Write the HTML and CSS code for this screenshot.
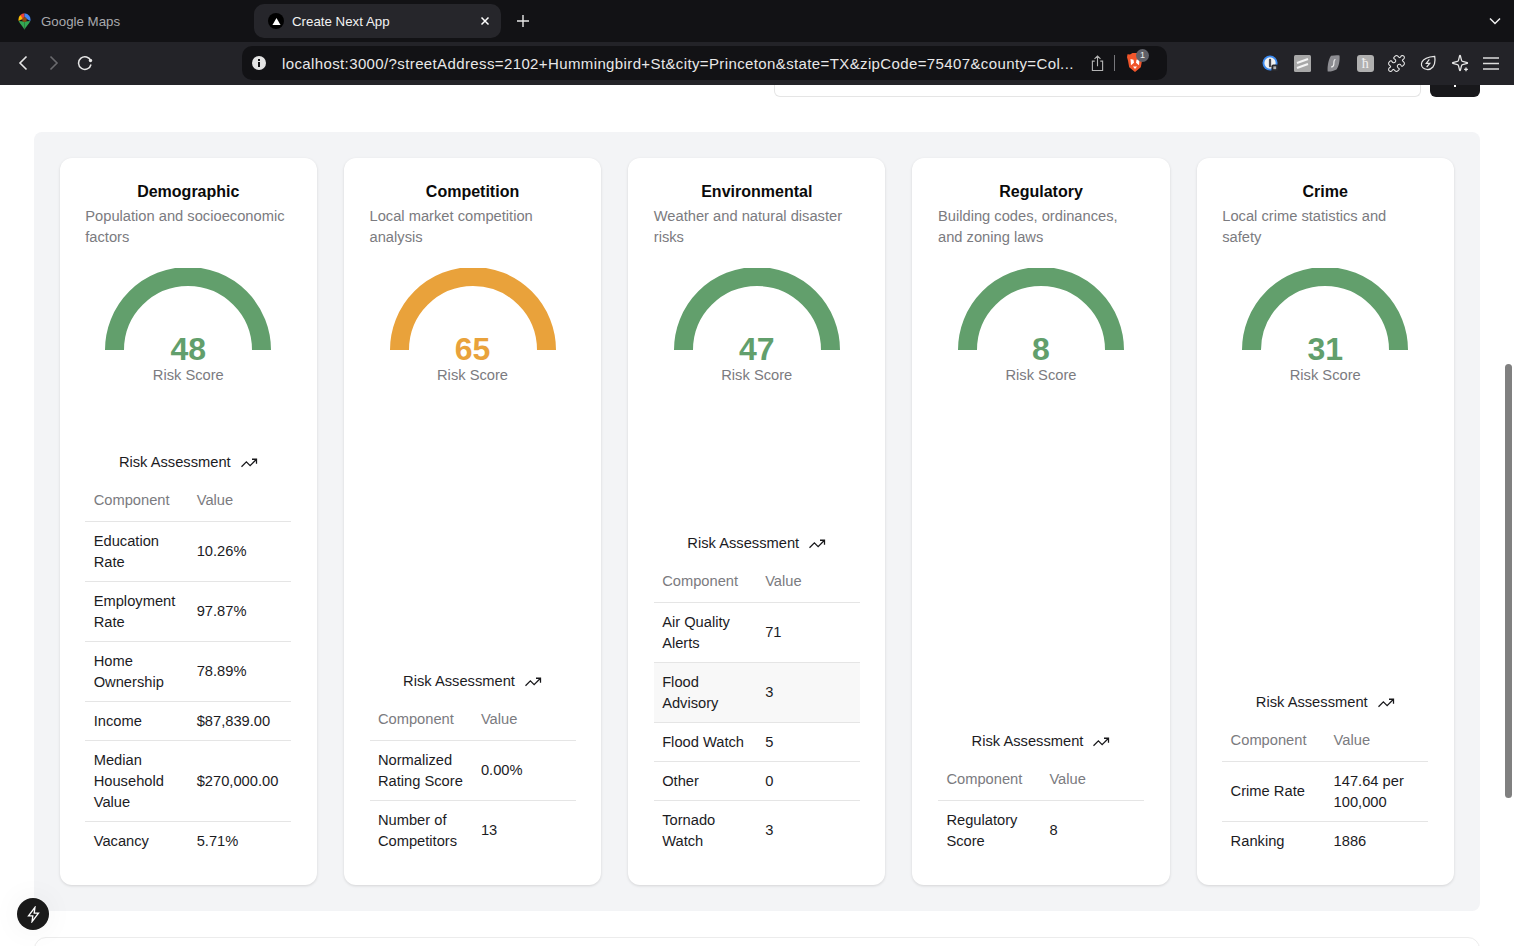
FILE: index.html
```html
<!DOCTYPE html>
<html lang="en">
<head>
<meta charset="utf-8">
<title>Create Next App</title>
<link rel="stylesheet" href="styles.css">
</head>
<body>
<div class="browser">
  <header class="tabstrip">
    <div class="tab tab-idle">
      <svg class="favicon" viewBox="0 0 14 18" width="13" height="17"><path fill="#34a853" d="M7 18c-1-3-5-6-6.300-9.500L7 9z"/><path fill="#34a853" d="M7 18c1-3 5-6 6.300-9.500L7 9z"/><path fill="#ea4335" d="M2.500 2A7 7 0 0 1 7 0v5L4 7.500z"/><path fill="#4285f4" d="M7 0a7 7 0 0 1 6.300 8.500L9 6 7 4z"/><path fill="#fbbc04" d="M2.500 2A7 7 0 0 0 .7 8.500L5 6z"/><circle cx="7" cy="7" r="2.500" fill="#8a4a10"/></svg>
      <span>Google Maps</span>
    </div>
    <div class="tab tab-active">
      <span class="next-fav"><svg viewBox="0 0 10 10" width="9" height="9"><path d="M5 1l4.500 8h-9z" fill="#fff"/></svg></span>
      <span class="tab-title">Create Next App</span>
      <svg class="tab-close" viewBox="0 0 10 10" width="10" height="10"><path d="M1.500 1.500l7 7M8.500 1.500l-7 7" stroke="#fff" stroke-width="1.500" fill="none"/></svg>
    </div>
    <svg class="tab-new" viewBox="0 0 12 12" width="12" height="12"><path d="M6 0v12M0 6h12" stroke="#e8e8e8" stroke-width="1.400" fill="none"/></svg>
    <svg class="tab-menu" viewBox="0 0 12 8" width="12" height="8"><path d="M1 1.500l5 5 5-5" stroke="#f0f0f0" stroke-width="1.500" fill="none"/></svg>
  </header>
  <nav class="toolbar">
    <div class="nav-buttons">
      <span class="tool"><svg viewBox="0 0 10 16" width="10" height="16"><path d="M8.500 1.500L2 8l6.500 6.500" stroke="#e6e6e6" stroke-width="1.600" fill="none"/></svg></span>
      <span class="tool"><svg viewBox="0 0 10 16" width="10" height="16"><path d="M1.500 1.500L8 8l-6.500 6.500" stroke="#6a6a6e" stroke-width="1.600" fill="none"/></svg></span>
      <span class="tool"><svg viewBox="0 0 16 16" width="16" height="16"><path d="M13.800 6A6.300 6.300 0 1 0 14 9.500" stroke="#e6e6e6" stroke-width="1.500" fill="none"/><circle cx="13.500" cy="5.500" r="1.700" fill="#e6e6e6"/></svg></span>
    </div>
    <div class="address">
      <svg class="info" viewBox="0 0 14 14" width="14" height="14"><circle cx="7" cy="7" r="7" fill="#e4e4e4"/><rect x="6" y="6" width="2" height="5" fill="#121215"/><rect x="6" y="3" width="2" height="2" fill="#121215"/></svg>
      <span class="url">localhost:3000/?streetAddress=2102+Hummingbird+St&amp;city=Princeton&amp;state=TX&amp;zipCode=75407&amp;county=Col...</span>
      <svg class="share" viewBox="0 0 14 18" width="13" height="17"><path d="M4 6.500H1.500v10h11v-10H10M7 12V1M3.800 4L7 1l3.200 3" stroke="#b4b4b4" stroke-width="1.200" fill="none"/></svg>
      <span class="sep"></span>
      <span class="brave">
        <svg viewBox="0 0 16 20" width="16" height="20"><path fill="#f1562b" d="M3 1.500L5.500 0h5L13 1.500l2.500-.3.500 3-1 3.500-1.200 6.500L8 19l-5.800-4.800L1 7.700 0 4.200l.5-3z"/><path fill="#fff" d="M3.500 6l3 .8.500 3-3 2.500zm9 0l-3 .8-.5 3 3 2.500zM6 13.500h4L8 16z"/></svg>
        <span class="badge">1</span>
      </span>
    </div>
    <div class="extensions">
      <span class="tool"><svg viewBox="0 0 18 18" width="17" height="17"><circle cx="8.500" cy="8.500" r="8" fill="#3d8bf0"/><circle cx="8.500" cy="8.500" r="6" fill="#f2f2f2"/><rect x="7.300" y="4" width="2.400" height="9" rx="1" fill="#4a4a50"/><rect x="10" y="10" width="7" height="7" rx="2" fill="#2a2a2e"/><rect x="12" y="12" width="3" height="3" fill="#b0b0b0"/></svg></span>
      <span class="tool"><svg viewBox="0 0 17 17" width="17" height="17"><rect width="17" height="17" rx="1.500" fill="#a8a8a8"/><path d="M3 8L14 4M3 13l11-4" stroke="#f4f4f4" stroke-width="2.200" fill="none"/></svg></span>
      <span class="tool"><svg viewBox="0 0 13 17" width="13" height="17"><path fill="#8d8d92" d="M4 .8C7 .2 11 0 12.500.5 13 5 12 11 9.500 14.500 7 16 3 16.800.7 16.500.2 13 1 5 4 .8z"/><path d="M8.500 4.500C6 4.500 7.500 8 6.500 10.500 6 12 5 12 4 12" stroke="#f0f0f0" stroke-width="1.200" fill="none"/></svg></span>
      <span class="tool"><span class="ext-letter">ħ</span></span>
      <span class="tool"><svg viewBox="0 0 24 24" width="19" height="19"><path d="M19.439 7.850c-.049.322.059.648.289.878l1.568 1.568c.47.47.706 1.087.706 1.704s-.235 1.233-.706 1.704l-1.611 1.611a.98.98 0 0 1-.837.276c-.47-.07-.802-.48-.968-.925a2.501 2.501 0 1 0-3.214 3.214c.446.166.855.497.925.968a.979.979 0 0 1-.276.837l-1.610 1.610a2.404 2.404 0 0 1-1.705.707 2.402 2.402 0 0 1-1.704-.706l-1.568-1.568a1.026 1.026 0 0 0-.877-.29c-.493.074-.84.504-1.020.968a2.500 2.500 0 1 1-3.237-3.237c.464-.18.894-.527.967-1.020a1.026 1.026 0 0 0-.289-.877l-1.568-1.568A2.402 2.402 0 0 1 1.998 12c0-.617.236-1.234.706-1.704L4.230 8.770c.24-.24.581-.353.917-.303.515.077.877.528 1.073 1.010a2.500 2.500 0 1 0 3.259-3.259c-.482-.196-.933-.558-1.010-1.073-.05-.336.062-.676.303-.917l1.525-1.525A2.402 2.402 0 0 1 12 1.998c.617 0 1.234.236 1.704.706l1.568 1.568c.23.23.556.338.877.29.493-.074.84-.504 1.020-.968a2.500 2.500 0 1 1 3.237 3.237c-.464.18-.894.527-.967 1.020Z" stroke="#e6e6e6" stroke-width="1.300" fill="none"/></svg></span>
      <span class="tool"><svg viewBox="0 0 18 18" width="16" height="16"><path d="M16.500 1.500c.8 5 .5 9-2 12-2.500 2.800-6.500 3.300-9.500 2-3-1.300-4-4.500-2.800-7.500C4 4 9 2 16.500 1.500z" stroke="#e6e6e6" stroke-width="1.400" fill="none"/><path d="M10.500 5L7 9.500h4L7.500 13.500" stroke="#e6e6e6" stroke-width="1.300" fill="none"/></svg></span>
      <span class="tool"><svg viewBox="0 0 24 24" width="18" height="18"><path d="M9.937 15.500A2 2 0 0 0 8.500 14.063l-6.135-1.582a.5.5 0 0 1 0-.962L8.500 9.936A2 2 0 0 0 9.937 8.500l1.582-6.135a.5.5 0 0 1 .963 0L14.063 8.500A2 2 0 0 0 15.500 9.937l6.135 1.581a.5.5 0 0 1 0 .964L15.500 14.063a2 2 0 0 0-1.437 1.437l-1.582 6.135a.5.5 0 0 1-.963 0z" stroke="#e6e6e6" stroke-width="1.700" fill="none"/><path d="M20 18v5M17.500 20.500h5" stroke="#e6e6e6" stroke-width="1.800" fill="none"/></svg></span>
      <span class="tool"><svg viewBox="0 0 16 13" width="16" height="13"><path d="M0 1h16M0 6.500h16M0 12h16" stroke="#dcdcdc" stroke-width="1.300" fill="none"/></svg></span>
    </div>
  </nav>
  <main class="viewport">
    <div class="searchrow">
      <div class="searchbox"></div>
      <div class="searchbtn"><span class="searchdot"></span></div>
    </div>
    <section class="panel">

      <article class="card">
        <h2 class="card-title">Demographic</h2>
        <p class="card-sub">Population and socioeconomic factors</p>
        <div class="gauge">
          <svg class="arc" viewBox="0 0 166 82" width="166" height="82"><path d="M9.500 82a73.500 73.500 0 0 1 147 0" class="arc-green"/></svg>
          <div class="score score-green">48</div>
          <div class="score-label">Risk Score</div>
        </div>
        <table class="risk">
          <caption><span class="cap">Risk Assessment <svg viewBox="0 0 24 24" width="18" height="18"><path d="M22 7l-8.500 8.500-5-5L2 17M16 7h6v6" stroke="#18181b" stroke-width="1.700" fill="none"/></svg></span></caption>
          <thead><tr><th>Component</th><th>Value</th></tr></thead>
          <tbody>
            <tr><td>Education Rate</td><td>10.26%</td></tr>
            <tr><td>Employment Rate</td><td>97.87%</td></tr>
            <tr><td>Home Ownership</td><td>78.89%</td></tr>
            <tr><td>Income</td><td>$87,839.00</td></tr>
            <tr><td>Median Household Value</td><td>$270,000.00</td></tr>
            <tr><td>Vacancy</td><td>5.71%</td></tr>
          </tbody>
        </table>
      </article>

      <article class="card">
        <h2 class="card-title">Competition</h2>
        <p class="card-sub">Local market competition analysis</p>
        <div class="gauge">
          <svg class="arc" viewBox="0 0 166 82" width="166" height="82"><path d="M9.500 82a73.500 73.500 0 0 1 147 0" class="arc-orange"/></svg>
          <div class="score score-orange">65</div>
          <div class="score-label">Risk Score</div>
        </div>
        <table class="risk">
          <caption><span class="cap">Risk Assessment <svg viewBox="0 0 24 24" width="18" height="18"><path d="M22 7l-8.500 8.500-5-5L2 17M16 7h6v6" stroke="#18181b" stroke-width="1.700" fill="none"/></svg></span></caption>
          <thead><tr><th>Component</th><th>Value</th></tr></thead>
          <tbody>
            <tr><td>Normalized Rating Score</td><td>0.00%</td></tr>
            <tr><td>Number of Competitors</td><td>13</td></tr>
          </tbody>
        </table>
      </article>

      <article class="card">
        <h2 class="card-title">Environmental</h2>
        <p class="card-sub">Weather and natural disaster risks</p>
        <div class="gauge">
          <svg class="arc" viewBox="0 0 166 82" width="166" height="82"><path d="M9.500 82a73.500 73.500 0 0 1 147 0" class="arc-green"/></svg>
          <div class="score score-green">47</div>
          <div class="score-label">Risk Score</div>
        </div>
        <table class="risk">
          <caption><span class="cap">Risk Assessment <svg viewBox="0 0 24 24" width="18" height="18"><path d="M22 7l-8.500 8.500-5-5L2 17M16 7h6v6" stroke="#18181b" stroke-width="1.700" fill="none"/></svg></span></caption>
          <thead><tr><th>Component</th><th>Value</th></tr></thead>
          <tbody>
            <tr><td>Air Quality Alerts</td><td>71</td></tr>
            <tr class="hovered"><td>Flood Advisory</td><td>3</td></tr>
            <tr><td>Flood Watch</td><td>5</td></tr>
            <tr><td>Other</td><td>0</td></tr>
            <tr><td>Tornado Watch</td><td>3</td></tr>
          </tbody>
        </table>
      </article>

      <article class="card">
        <h2 class="card-title">Regulatory</h2>
        <p class="card-sub">Building codes, ordinances, and zoning laws</p>
        <div class="gauge">
          <svg class="arc" viewBox="0 0 166 82" width="166" height="82"><path d="M9.500 82a73.500 73.500 0 0 1 147 0" class="arc-green"/></svg>
          <div class="score score-green">8</div>
          <div class="score-label">Risk Score</div>
        </div>
        <table class="risk">
          <caption><span class="cap">Risk Assessment <svg viewBox="0 0 24 24" width="18" height="18"><path d="M22 7l-8.500 8.500-5-5L2 17M16 7h6v6" stroke="#18181b" stroke-width="1.700" fill="none"/></svg></span></caption>
          <thead><tr><th>Component</th><th>Value</th></tr></thead>
          <tbody>
            <tr><td>Regulatory Score</td><td>8</td></tr>
          </tbody>
        </table>
      </article>

      <article class="card">
        <h2 class="card-title">Crime</h2>
        <p class="card-sub">Local crime statistics and safety</p>
        <div class="gauge">
          <svg class="arc" viewBox="0 0 166 82" width="166" height="82"><path d="M9.500 82a73.500 73.500 0 0 1 147 0" class="arc-green"/></svg>
          <div class="score score-green">31</div>
          <div class="score-label">Risk Score</div>
        </div>
        <table class="risk">
          <caption><span class="cap">Risk Assessment <svg viewBox="0 0 24 24" width="18" height="18"><path d="M22 7l-8.500 8.500-5-5L2 17M16 7h6v6" stroke="#18181b" stroke-width="1.700" fill="none"/></svg></span></caption>
          <thead><tr><th>Component</th><th>Value</th></tr></thead>
          <tbody>
            <tr><td class="cell-single">Crime Rate</td><td>147.64 per 100,000</td></tr>
            <tr><td>Ranking</td><td>1886</td></tr>
          </tbody>
        </table>
      </article>

    </section>
    <section class="next-section"></section>
    <div class="scrollthumb"></div>
    <div class="devbtn"><svg viewBox="0 0 24 24" width="17" height="17"><path d="M14 2L5 14h6l-1 8 9-12h-6z" stroke="#fff" stroke-width="1.900" fill="none"/></svg></div>
  </main>
</div>
</body>
</html>
```

FILE: styles.css
```css
* { box-sizing: border-box; }
html, body { margin: 0; height: 946px; overflow: hidden; background: #fff; }
body { font-family: "Liberation Sans", Arial, sans-serif; }

.browser { display: flex; flex-direction: column; height: 946px; }

.tabstrip { height: 42px; flex: none; background: #121215; display: flex; align-items: center; padding: 0 13px 0 0; color: #fff; font-size: 13.300px; }
.tab { display: flex; align-items: center; height: 34px; }
.tab-idle { width: 254px; padding-left: 18px; gap: 10px; color: #a9a9ad; }
.tab-active { width: 247px; background: #26262b; border-radius: 10px; padding: 0 11px 0 14px; color: #f2f2f2; }
.next-fav { width: 16px; height: 16px; border-radius: 50%; background: #000; display: flex; align-items: center; justify-content: center; }
.tab-title { margin-left: 8px; flex: 1; }
.tab-new { margin-left: 16px; }
.tab-menu { margin-left: auto; }

.toolbar { height: 43px; flex: none; background: #232328; display: flex; align-items: center; padding: 0 7px 1px 7px; }
.nav-buttons { display: flex; width: 94px; }
.tool { width: 31.500px; height: 24px; display: flex; align-items: center; justify-content: center; }
.nav-buttons .tool { width: 31.500px; }
.address { margin-left: 141px; width: 925px; height: 34px; background: #121215; border-radius: 10px; display: flex; align-items: center; padding-left: 10px; color: #e8e8e8; }
.info { flex: none; }
.url { margin-left: 16px; width: 809px; font-size: 15px; letter-spacing: .38px; white-space: nowrap; overflow: hidden; }
.share { flex: none; }
.sep { width: 1px; height: 16px; background: #77777b; margin-left: 10px; flex: none; }
.brave { position: relative; margin-left: 12px; display: flex; }
.badge { position: absolute; top: -4px; left: 9px; width: 13px; height: 13px; border-radius: 50%; background: #5f6068; color: #eee; font-size: 9px; line-height: 13px; text-align: center; }
.extensions { margin-left: auto; display: flex; }
.ext-letter { width: 17px; height: 17px; background: #b0b0b0; border-radius: 3px; color: #f2f2f2; font-size: 14px; line-height: 17px; text-align: center; font-family: "Liberation Serif", serif; }

.viewport { position: relative; flex: 1; min-height: 0; overflow: hidden; }

.searchrow { display: flex; justify-content: flex-end; gap: 9px; height: 12px; padding-right: 34px; }
.searchbox { width: 647px; height: 12px; background: #fff; border: 1px solid #e5e5e5; border-top: 0; border-radius: 0 0 6px 6px; }
.searchbtn { width: 50px; height: 12px; background: #18181b; border-radius: 0 0 6px 6px; display: flex; justify-content: center; }
.searchdot { width: 2px; height: 2px; background: #fff; }

.panel { margin: 35px 34px 0; padding: 26px 26px 26px 25.600px; background: #f3f4f6; border-radius: 8px; display: grid; grid-template-columns: repeat(5, 257.400px); column-gap: 26.850px; }
.card { min-width: 0; background: #fff; border-radius: 12px; box-shadow: 0 1px 3px rgba(0,0,0,.13); padding: 23px 25.700px 24px; display: flex; flex-direction: column; }
.card-title { margin: 0; text-align: center; font-size: 16px; line-height: 21px; font-weight: 700; color: #0a0a0a; }
.card-sub { margin: 3.500px 0 0; font-size: 14.700px; line-height: 21px; color: #7b7b80; }

.gauge { margin-top: 20.500px; margin-bottom: 66px; display: flex; flex-direction: column; align-items: center; }
.arc { display: block; }
.arc path { fill: none; stroke-width: 19; }
.arc-green { stroke: #629f6c; }
.arc-orange { stroke: #e9a23b; }
.score { margin-top: -17px; font-size: 32px; line-height: 32px; font-weight: 700; }
.score-green { color: #629f6c; }
.score-orange { color: #e9a23b; }
.score-label { font-size: 14.700px; line-height: 21px; color: #7b7b80; }

.risk { margin-top: auto; width: 100%; table-layout: fixed; border-collapse: collapse; font-size: 14.700px; line-height: 21px; color: #1c1c1f; }
.risk caption { padding-bottom: 8px; }
.cap { display: flex; align-items: center; justify-content: center; gap: 9px; }
.risk th { font-weight: 400; text-align: left; color: #7b7b80; padding: 9px 8.400px 10px; border-bottom: 1px solid #e5e5e5; }
.risk td { padding: 9px 8.400px 8px; vertical-align: middle; }
.risk td:last-child, .risk td.cell-single { padding-top: 8.500px; padding-bottom: 8.500px; }
.risk tbody tr { border-bottom: 1px solid #e5e5e5; }
.risk tbody tr:last-child { border-bottom: 0; }
.risk tbody tr:last-child td { padding-bottom: 9px; }
.risk tr.hovered { background: #f8f8f8; }

.next-section { margin: 26px 34px 0; height: 60px; border: 1px solid #ececec; border-radius: 12px; }
.scrollthumb { position: absolute; right: 2px; top: 279px; width: 7px; height: 434px; border-radius: 4px; background: #808080; }
.devbtn { position: absolute; left: 17px; top: 813px; width: 32px; height: 32px; border-radius: 50%; background: #1a1a1a; box-shadow: 0 0 0 1px rgba(255,255,255,.4), 0 0 30px rgba(0,0,0,.06); display: flex; align-items: center; justify-content: center; }
```
